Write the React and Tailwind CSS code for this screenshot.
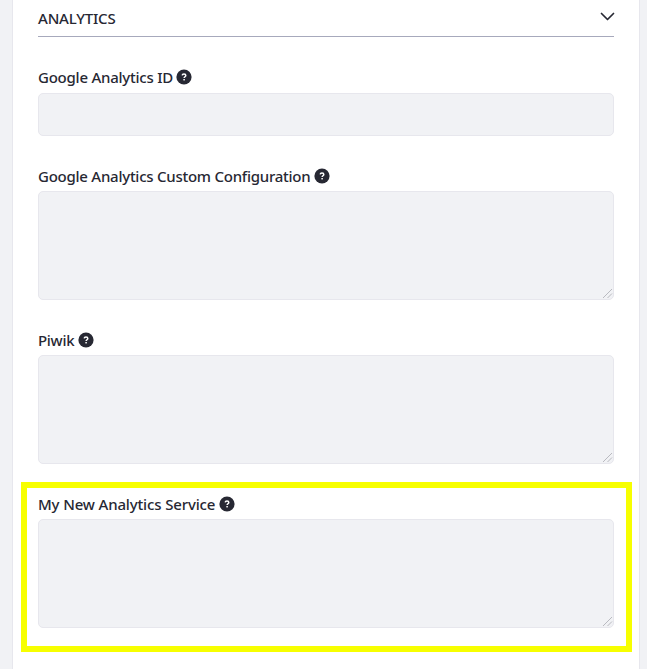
import React from "react";

function HelpIcon() {
  return (
    <svg width="16" height="16" viewBox="0 0 16 16" className="shrink-0" aria-hidden="true">
      <circle cx="8" cy="8" r="7.600" fill="#272833" />
      <path d="M6.200 6.400C6.300 5.400 7 4.900 8 4.900c1.100 0 1.800.6 1.800 1.500C9.800 7.700 8.100 7.800 8.100 9.100" fill="none" stroke="#fff" strokeWidth="1.500" />
      <rect x="7.300" y="9.900" width="1.600" height="1.500" rx=".4" fill="#fff" />
    </svg>
  );
}

function Label({ text, tracking }) {
  return (
    <div className="flex h-5 items-center gap-[3.500px]">
      <span className={"text-[15px] leading-5 font-medium whitespace-nowrap " + tracking}>{text}</span>
      <HelpIcon />
    </div>
  );
}

function TextArea() {
  return (
    <div className="relative mt-[5px] h-[109px]">
      <textarea className="block h-full w-full resize-none rounded-[5px] border border-[#e7e7ed] bg-[#f1f2f5] outline-none" />
      <svg width="11" height="11" viewBox="0 0 11 11" className="absolute right-[1px] bottom-[1px]" aria-hidden="true">
        <path d="M1 10L10 1M5.500 10L10 5.500" fill="none" stroke="#b9bac0" strokeWidth="1" />
      </svg>
    </div>
  );
}

export default function App() {
  return (
    <div className="h-[669px] overflow-hidden bg-[#f1f2f5] pr-[7px] pl-3 font-['Noto_Sans','Open_Sans',sans-serif] text-[#272833]">
      <main className="h-full border-x border-[#e7e7ed] bg-white px-[25px]">
        <header className="flex h-[37px] items-center justify-between border-b border-[#a7a9bc]">
          <h3 className="text-[15px] leading-5 font-medium tracking-[-0.18px]">ANALYTICS</h3>
          <svg width="14" height="9" viewBox="0 0 14 9" className="mb-1 overflow-visible" aria-hidden="true">
            <path d="M1.500 1.500L7.500 7.500L13.500 1.500" fill="none" stroke="#272833" strokeWidth="1.700" strokeLinecap="round" strokeLinejoin="round" />
          </svg>
        </header>
        <div className="mt-[30px]">
          <Label text="Google Analytics ID" tracking="tracking-[-0.240px]" />
          <input className="mt-[6px] block h-[43px] w-full rounded-[5px] border border-[#e7e7ed] bg-[#f1f2f5] outline-none" />
        </div>
        <div className="mt-[30px]">
          <Label text="Google Analytics Custom Configuration" tracking="tracking-[-0.250px]" />
          <TextArea />
        </div>
        <div className="mt-[30px]">
          <Label text="Piwik" tracking="tracking-[-0.300px]" />
          <TextArea />
        </div>
        <div className="-mr-[18px] -ml-[17px] mt-[18px] h-[170px] border-6 border-[#f7ff00] pr-3 pl-[11px] pt-[6px]">
          <Label text="My New Analytics Service" tracking="tracking-[-0.150px]" />
          <TextArea />
        </div>
      </main>
    </div>
  );
}
